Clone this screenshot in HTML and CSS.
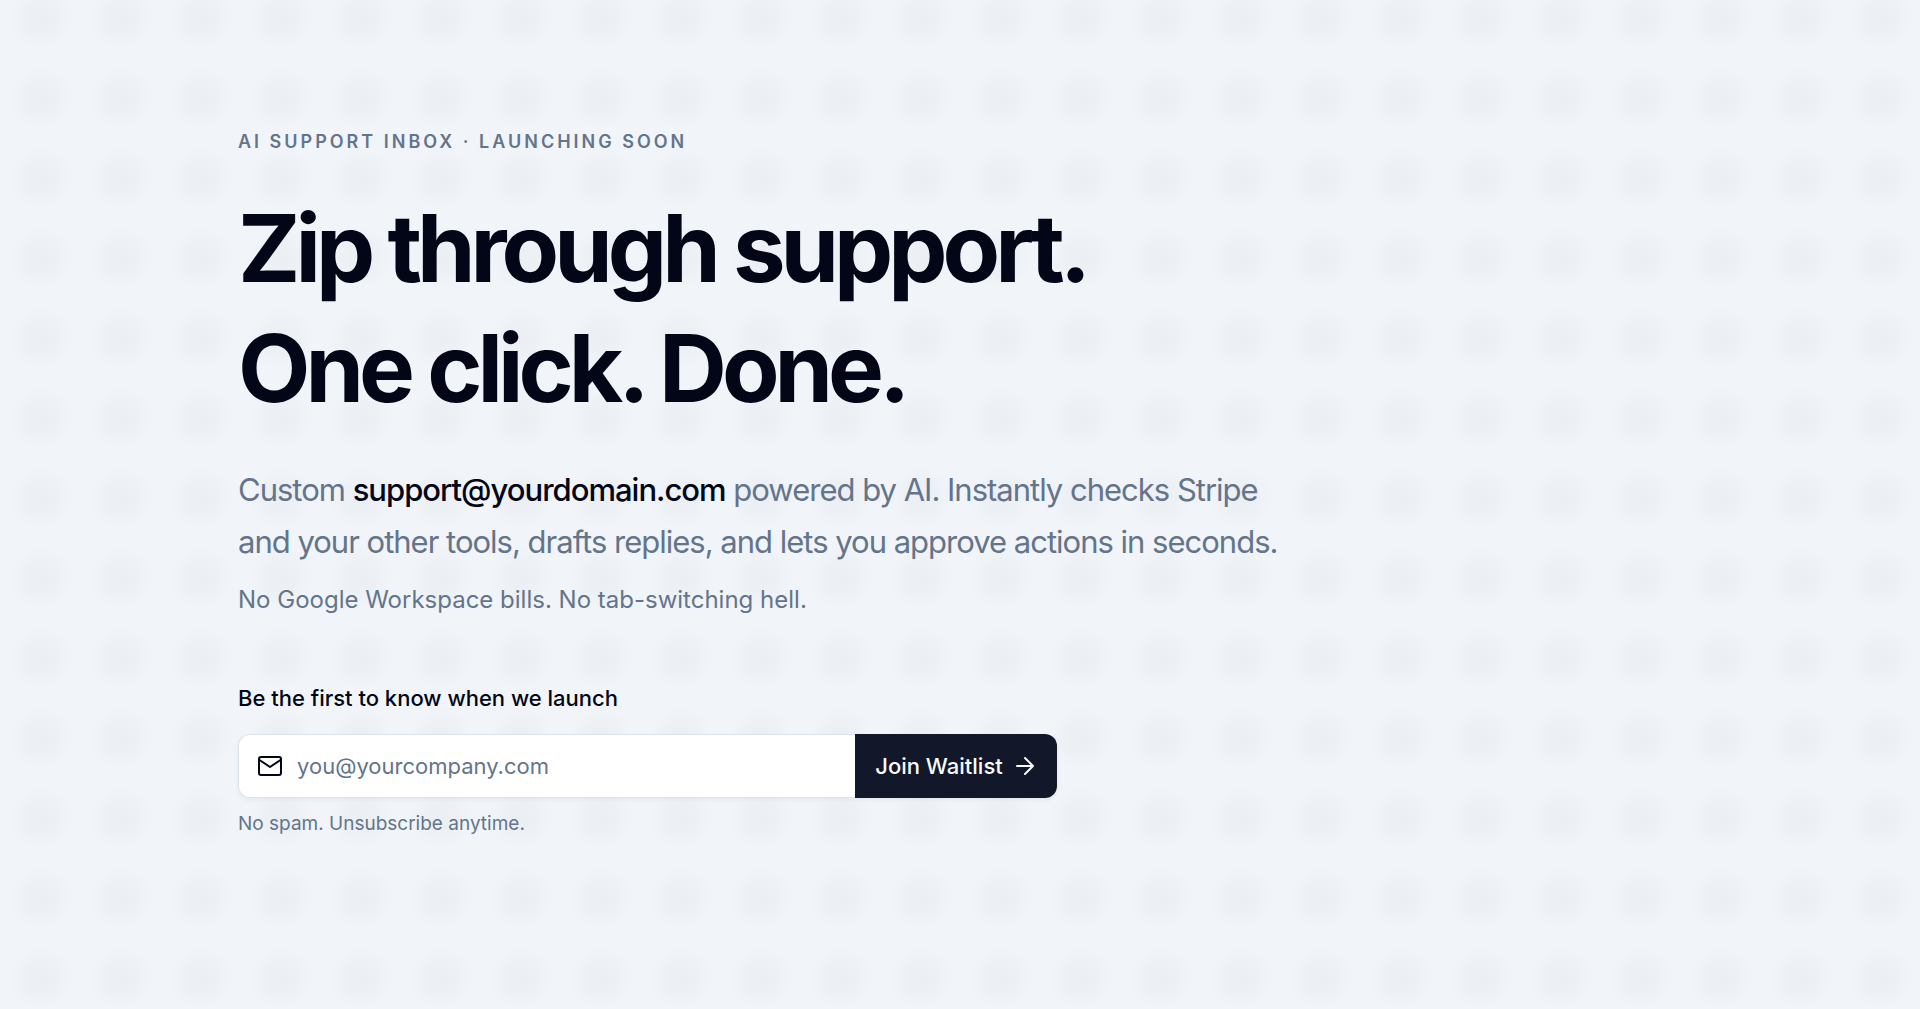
FILE: index.html
```html
<!DOCTYPE html>
<html lang="en">
<head>
    <meta charset="UTF-8">
    <meta name="viewport" content="width=device-width, initial-scale=1.0">
    <title>AI Support Inbox</title>
    <link rel="stylesheet" href="styles.css">
</head>
<body>

    <main class="hero">
        <p class="eyebrow">AI Support Inbox · Launching Soon</p>
        <h1>Zip through support.<br>One click. Done.</h1>
        <p class="lead">Custom <strong>support@yourdomain.com</strong> powered by AI. Instantly checks Stripe<br>and your other tools, drafts replies, and lets you approve actions in seconds.</p>
        <p class="note">No Google Workspace bills. No tab-switching hell.</p>

        <!-- Waitlist form -->
        <form class="waitlist">
            <label for="email">Be the first to know when we launch</label>
            <div class="field-row">
                <div class="field">
                    <svg class="mail-icon" viewBox="0 0 24 24" aria-hidden="true">
                        <rect x="1" y="3" width="22" height="18" rx="2"></rect>
                        <path d="M1.5 6L12 13 22.5 6"></path>
                    </svg>
                    <input type="email" id="email" placeholder="you@yourcompany.com">
                </div>
                <button type="submit">
                    Join Waitlist
                    <svg class="arrow-icon" viewBox="0 0 24 24" aria-hidden="true">
                        <path d="M4 12h16M12 4l8 8-8 8"></path>
                    </svg>
                </button>
            </div>
            <p class="fine-print">No spam. Unsubscribe anytime.</p>
        </form>
    </main>

</body>
</html>
```

FILE: styles.css
```css
* {
    box-sizing: border-box;
}
body {
    margin: 0;
    min-height: 100vh;
    font-family: Inter, "Liberation Sans", sans-serif;
    color: #020617;
    background-color: #f1f5f9;
    background-image: radial-gradient(circle at center, #ebeef3 0, #edf0f5 16px, #f1f5f9 32px);
    background-size: 80px 80px;
    background-position: 1px -22px;
}
h1, p {
    margin: 0;
}
.hero {
    padding: 128px 24px 128px 238px;
}
.eyebrow {
    font-size: 18px;
    line-height: 28px;
    font-weight: 600;
    letter-spacing: 3px;
    text-transform: uppercase;
    color: #64748b;
}
h1 {
    margin-top: 32px;
    font-size: 94px;
    line-height: 120px;
    font-weight: 700;
    letter-spacing: -5px;
}
.lead {
    margin-top: 36px;
    font-size: 31px;
    line-height: 52px;
    font-weight: 400;
    letter-spacing: -1px;
    color: #64748b;
}
.lead strong {
    font-weight: 500;
    color: #020617;
}
.note {
    margin-top: 14px;
    font-size: 24px;
    line-height: 36px;
    color: #64748b;
}
.waitlist {
    max-width: 819px;
    margin-top: 64px;
}
.waitlist label {
    display: block;
    font-size: 22px;
    line-height: 32px;
    font-weight: 500;
}
.field-row {
    display: flex;
    height: 64px;
    margin-top: 20px;
    border-radius: 12px;
    box-shadow: 0 2px 4px rgba(15, 23, 42, 0.05);
}
.field {
    flex: 1;
    display: flex;
    align-items: center;
    gap: 15px;
    padding-left: 19px;
    background-color: #fff;
    border: 1px solid #dbe3ec;
    border-right: none;
    border-radius: 12px 0 0 12px;
}
.field input {
    flex: 1;
    min-width: 0;
    padding: 0;
    border: none;
    outline: none;
    background: none;
    font-family: inherit;
    font-size: 22px;
    color: #020617;
}
.field input::placeholder {
    color: #64748b;
}
svg {
    fill: none;
    stroke: currentColor;
    stroke-width: 2;
    stroke-linecap: round;
    stroke-linejoin: round;
}
.mail-icon,
.arrow-icon {
    width: 24px;
    height: 24px;
}
button {
    display: flex;
    align-items: center;
    justify-content: center;
    gap: 10px;
    width: 202px;
    border: none;
    border-radius: 0 12px 12px 0;
    background-color: #121829;
    color: #f8fafc;
    font-family: inherit;
    font-size: 22px;
    font-weight: 500;
    cursor: pointer;
}
.fine-print {
    margin-top: 12px;
    font-size: 19px;
    line-height: 28px;
    color: #64748b;
}
```
